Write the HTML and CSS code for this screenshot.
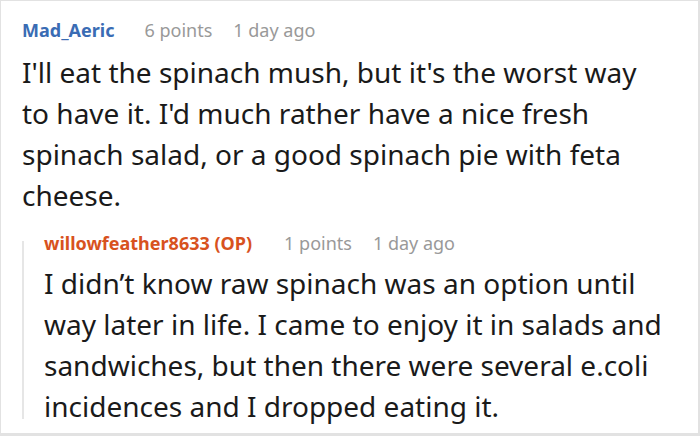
FILE: index.html
```html
<!DOCTYPE html>
<html>
<head>
<meta charset="utf-8">
<link rel="stylesheet" href="styles.css">
</head>
<body>
<div class="frame">
  <div class="comment">
    <div class="meta">
      <span class="author">Mad_Aeric</span>
      <span class="info">6 points</span>
      <span class="info">1 day ago</span>
    </div>
    <p class="text">I'll eat the spinach mush, but it's the worst way to have it. I'd much rather have a nice fresh spinach salad, or a good spinach pie with feta cheese.</p>
    <div class="reply">
      <div class="meta">
        <span class="author op">willowfeather8633 (OP)</span>
        <span class="info">1 points</span>
        <span class="info">1 day ago</span>
      </div>
      <p class="text">I didn’t know raw spinach was an option until way later in life. I came to enjoy it in salads and sandwiches, but then there were several e.coli incidences and I dropped eating it.</p>
    </div>
  </div>
</div>
</body>
</html>
```

FILE: styles.css
```css
html, body {
  margin: 0;
  padding: 0;
  background: #fff;
}
.frame {
  width: 700px;
  height: 436px;
  box-sizing: border-box;
  border: 1px solid #e2e2e2;
  border-right-width: 2px;
  border-bottom-width: 3px;
  overflow: hidden;
  font-family: "Noto Sans", "Open Sans", sans-serif;
}
.comment {
  padding: 17px 29px 0 21px;
}
.meta {
  display: flex;
  align-items: baseline;
  font-size: 18px;
  line-height: 24px;
}
.author {
  font-weight: 700;
  color: #3a6cb4;
  margin-right: 30px;
}
.author.op {
  color: #d8521e;
  margin-right: 32px;
}
.info {
  color: #999;
  margin-right: 21px;
}
.text {
  margin: 9.5px 0 0 0;
  font-size: 28px;
  line-height: 41px;
  color: #1a1a1a;
}
.reply {
  position: relative;
  margin-top: 15.5px;
  padding-left: 22px;
}
.reply::before {
  content: "";
  position: absolute;
  left: 0;
  top: 10px;
  bottom: 8px;
  width: 2px;
  background: #e6e6e6;
}
.reply .text {
  margin-top: 7.5px;
}
```
